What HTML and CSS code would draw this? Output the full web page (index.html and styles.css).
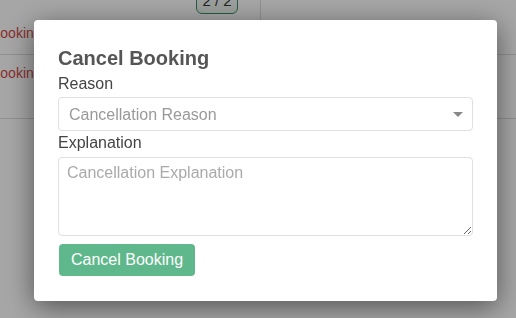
FILE: index.html
```html
<!DOCTYPE html>
<html>
<head>
<meta charset="utf-8">
<link rel="stylesheet" href="styles.css">
</head>
<body>
<div class="page">
  <div class="row row-first">
    <div class="name">Booking</div>
    <div class="badge-cell"><span class="badge">2 / 2</span></div>
    <div class="rest"></div>
  </div>
  <div class="row row-second">
    <div class="name">Booking</div>
    <div class="badge-cell"></div>
    <div class="rest"></div>
  </div>
</div>

<div class="overlay">
  <div class="modal">
    <h2 class="title">Cancel Booking</h2>
    <label class="label" for="reason">Reason</label>
    <div class="select-wrap">
      <select id="reason" class="select">
        <option>Cancellation Reason</option>
      </select>
      <svg class="caret" width="10" height="5" viewBox="0 0 10 5"><path d="M0 0h10L5 5z" fill="#888"/></svg>
    </div>
    <label class="label" for="explanation">Explanation</label>
    <textarea id="explanation" class="textarea" placeholder="Cancellation Explanation"></textarea>
    <button class="btn">Cancel Booking</button>
  </div>
</div>
</body>
</html>
```
FILE: styles.css
```css
html, body {
  margin: 0;
  padding: 0;
  background: #fff;
  font-family: "Liberation Sans", Arial, sans-serif;
  overflow: hidden;
}

.page {
  width: 516px;
}

.row {
  display: flex;
  box-sizing: border-box;
  border-bottom: 1px solid #ddd;
}

.row-first {
  height: 55px;
}

.row-second {
  height: 64px;
}

.name {
  width: 205px;
  margin-left: -9px;
  font-size: 14px;
  line-height: 20px;
  color: #d24a46;
}

.row-first .name {
  padding-top: 23px;
}

.row-second .name {
  padding-top: 8px;
}

.badge-cell {
  width: 64px;
  border-right: 1px solid #ddd;
}

.badge {
  display: block;
  box-sizing: border-box;
  width: 42px;
  height: 26px;
  margin-top: -12px;
  border: 1px solid #3f8f68;
  border-radius: 6px;
  background: #eef5f1;
  color: #333;
  font-size: 15px;
  line-height: 24px;
  text-align: center;
}

.rest {
  flex: 1;
}

.overlay {
  position: fixed;
  inset: 0;
  background: rgba(0, 0, 0, 0.35);
  padding: 20px 0 0 34px;
  box-sizing: border-box;
}

.modal {
  box-sizing: border-box;
  width: 463px;
  height: 281px;
  background: #fff;
  border-radius: 4px;
  box-shadow: 0 6px 28px rgba(0, 0, 0, 0.5);
  padding: 26px 24px 25px 24px;
  display: flex;
  flex-direction: column;
}

.title {
  margin: 0 0 4px 0;
  font-size: 20px;
  line-height: 24px;
  font-weight: bold;
  color: #555;
}

.label {
  display: block;
  font-size: 16px;
  line-height: 20px;
  color: #444;
  margin-bottom: 3px;
}

.select-wrap {
  position: relative;
  margin-bottom: 2px;
}

.select {
  display: block;
  box-sizing: border-box;
  width: 415px;
  height: 34px;
  margin: 0;
  padding: 0 30px 0 10px;
  border: 1px solid #e0e0e0;
  border-radius: 4px;
  background: #fff;
  color: #999;
  font-family: inherit;
  font-size: 16px;
  -webkit-appearance: none;
  appearance: none;
  outline: none;
}

.caret {
  position: absolute;
  right: 10px;
  top: 15px;
}

.textarea {
  display: block;
  box-sizing: border-box;
  width: 415px;
  height: 79px;
  margin: 1px 0 0 0;
  padding: 5px 8px;
  border: 1px solid #e0e0e0;
  border-radius: 4px;
  font-family: inherit;
  font-size: 16px;
  line-height: 20px;
  color: #444;
  outline: none;
}

.textarea::placeholder {
  color: #aaa;
}

.btn {
  align-self: flex-start;
  margin-top: 8px;
  margin-left: 1px;
  box-sizing: border-box;
  height: 32px;
  padding: 0 12px;
  border: none;
  border-radius: 4px;
  background: #5fb88b;
  color: #fff;
  font-family: inherit;
  font-size: 16px;
  line-height: 32px;
}
```
